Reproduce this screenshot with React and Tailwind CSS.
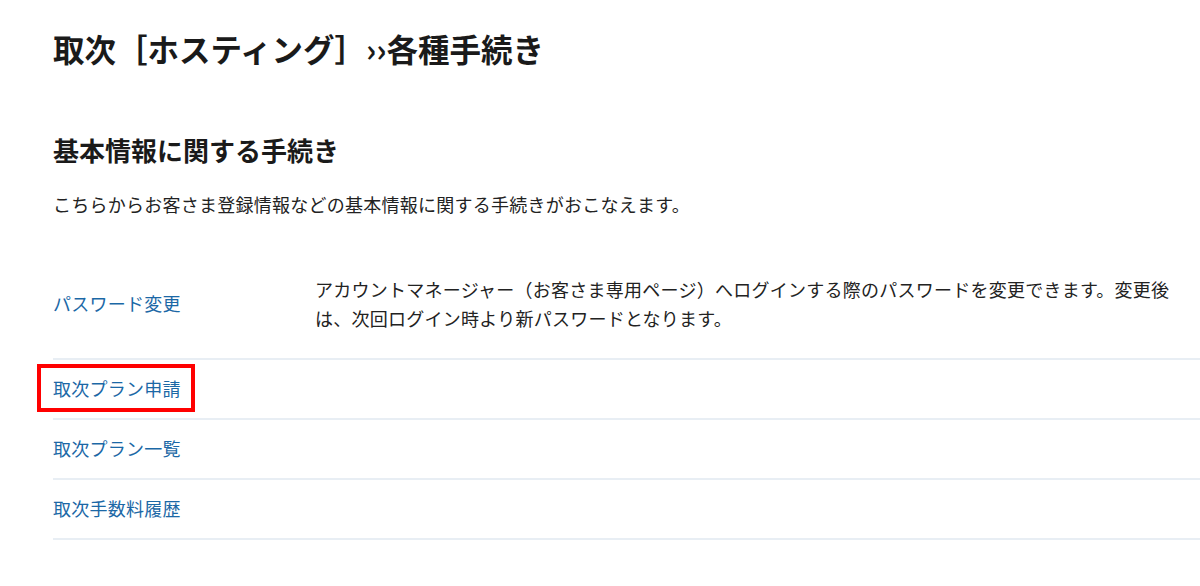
import React from "react";

const font = { fontFamily: '"Noto Sans CJK JP", "Noto Sans", sans-serif' };

function Row({ label, desc, boxed, first }) {
  return (
    <div className={`border-b-2 border-[#e8eef4] pr-[20px] ${first ? "pt-[15px] pb-[24px]" : "pt-[14px] pb-[14.5px]"}`}>
      <div className="flex items-center">
        <div className="w-[262px] shrink-0">
          <a href="#" className="relative inline-block text-[#1b68a6] no-underline">
            {label}
            {boxed && (
              <span className="absolute -left-[16px] -right-[14px] -top-[10px] -bottom-[9px] border-4 border-[#ff0000]" />
            )}
          </a>
        </div>
        {desc && <div className="flex-1 text-[#222]">{desc}</div>}
      </div>
    </div>
  );
}

export default function App() {
  return (
    <div className="w-[1200px] h-[586px] bg-white overflow-hidden pl-[53px]" style={font}>
      <h1 className="pt-[25px] text-[31.5px] font-bold leading-[46px] text-[#1a1a1a]">
        取次［ホスティング］››各種手続き
      </h1>
      <h2 className="mt-[59px] text-[26px] font-bold leading-[39px] text-[#1a1a1a]">
        基本情報に関する手続き
      </h2>
      <p className="mt-[21px] text-[18px] tracking-[0.25px] leading-[29.5px] text-[#222]">
        こちらからお客さま登録情報などの基本情報に関する手続きがおこなえます。
      </p>
      <div className="mt-[40px] text-[18px] tracking-[0.25px] leading-[29.5px]">
        <Row
          first
          label="パスワード変更"
          desc="アカウントマネージャー（お客さま専用ページ）へログインする際のパスワードを変更できます。変更後は、次回ログイン時より新パスワードとなります。"
        />
        <Row label="取次プラン申請" boxed />
        <Row label="取次プラン一覧" />
        <Row label="取次手数料履歴" />
      </div>
    </div>
  );
}
